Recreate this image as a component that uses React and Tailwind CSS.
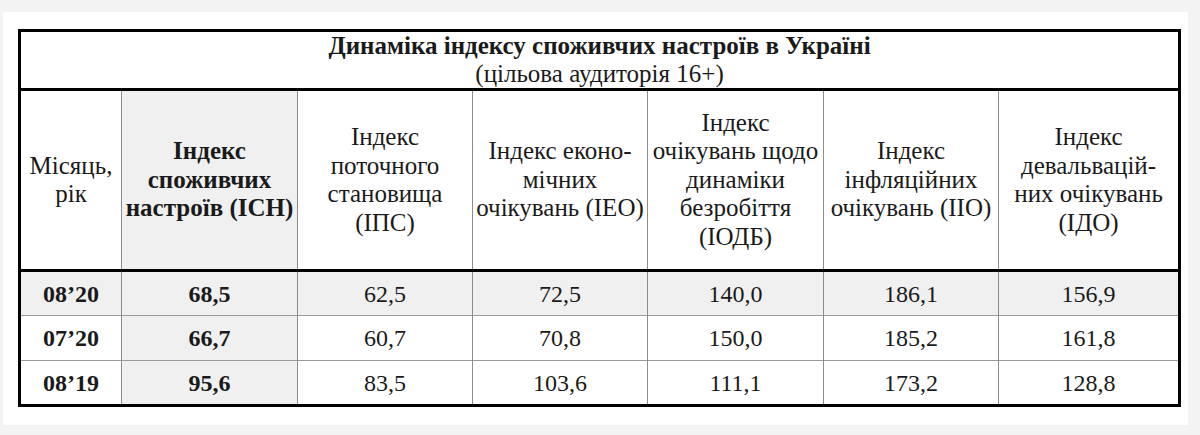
import React from "react";

const headers = [
    { lines: ["Місяць,", "рік"] },
    { lines: ["Індекс", "споживчих", "настроїв (ІСН)"], bold: true, gray: true },
    { lines: ["Індекс", "поточного", "становища", "(ІПС)"] },
    { lines: ["Індекс еконо-", "мічних", "очікувань (ІЕО)"] },
    { lines: ["Індекс", "очікувань щодо", "динаміки", "безробіття", "(ІОДБ)"] },
    { lines: ["Індекс", "інфляційних", "очікувань (ІІО)"] },
    { lines: ["Індекс", "девальвацій-", "них очікувань", "(ІДО)"] },
];

const rows = [
    { month: "08’20", vals: ["68,5", "62,5", "72,5", "140,0", "186,1", "156,9"], gray: true },
    { month: "07’20", vals: ["66,7", "60,7", "70,8", "150,0", "185,2", "161,8"] },
    { month: "08’19", vals: ["95,6", "83,5", "103,6", "111,1", "173,2", "128,8"] },
];

const widths = ["w-[102px]", "w-[176px]", "w-[175px]", "w-[175px]", "w-[176px]", "w-[175px]", "w-[181px]"];

export default function App() {
    return (
        <div className="w-[1200px] h-[435px] bg-[#f3f3f3] pt-3 pl-[3px] overflow-hidden font-serif">
            <div className="w-[1185px] h-[413px] bg-white pt-[17px] pl-[15px]">
                <table className="w-[1160px] table-fixed border-collapse border-[3px] border-black text-[#1a1a1a] font-[Liberation_Serif,Times_New_Roman,DejaVu_Serif,serif]">
                    <colgroup>
                        {widths.map((w, i) => <col key={i} className={w} />)}
                    </colgroup>
                    <tbody>
                        <tr className="h-[58px] border-b-[3px] border-black">
                            <td colSpan={7} className="text-center text-[25px] leading-[28px] p-0">
                                <div className="font-bold">Динаміка індексу споживчих настроїв в Україні</div>
                                <div>(цільова аудиторія 16+)</div>
                            </td>
                        </tr>
                        <tr className="h-[181px] border-b-[3px] border-black">
                            {headers.map((h, i) => (
                                <td
                                    key={i}
                                    className={`text-center align-middle text-[25px] leading-[28.5px] p-0 border-l border-[#8c8c8c] first:border-l-0 ${h.bold ? "font-bold" : ""} ${h.gray ? "bg-[#f0f0f0]" : ""}`}
                                >
                                    {h.lines.map((l, j) => <div key={j} className="whitespace-nowrap">{l}</div>)}
                                </td>
                            ))}
                        </tr>
                        {rows.map((r, ri) => (
                            <tr key={ri} className={`h-[45px] ${ri < rows.length - 1 ? "border-b border-[#9a9a9a]" : ""} ${r.gray ? "bg-[#f0f0f0]" : ""}`}>
                                <td className="text-center font-bold text-[24px] p-0">{r.month}</td>
                                {r.vals.map((v, vi) => (
                                    <td
                                        key={vi}
                                        className={`text-center text-[24px] p-0 border-l border-[#8c8c8c] ${vi === 0 ? "font-bold bg-[#f0f0f0]" : ""}`}
                                    >
                                        {v}
                                    </td>
                                ))}
                            </tr>
                        ))}
                    </tbody>
                </table>
            </div>
        </div>
    );
}
